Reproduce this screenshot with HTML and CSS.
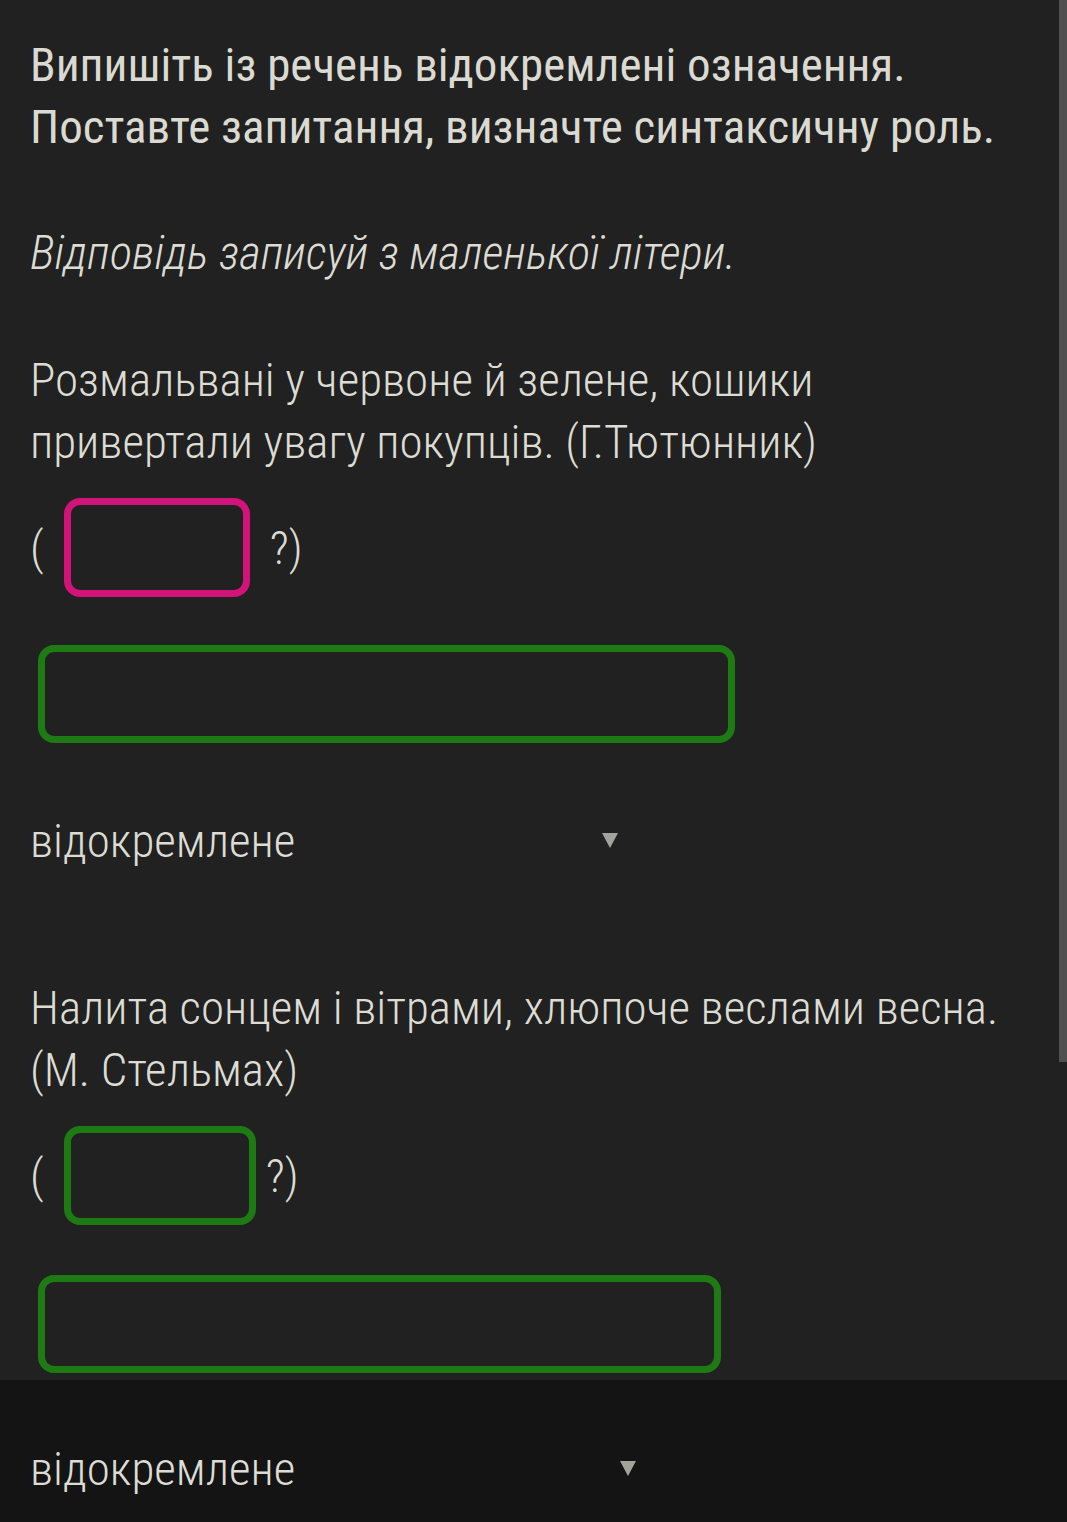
FILE: index.html
```html
<!DOCTYPE html>
<html>
<head>
  <meta charset="utf-8">
  <title>Відокремлені означення</title>
  <link rel="stylesheet" href="styles.css">
</head>
<body>
  <div class="page">
    <div class="task">
      <h1 class="task-title">Випишіть із речень відокремлені означення. Поставте запитання, визначте синтаксичну роль.</h1>
      <p class="hint">Відповідь записуй з маленької літери.</p>
    </div>

    <div class="item">
      <p class="sentence">Розмальвані у червоне й зелене, кошики привертали увагу покупців. (Г.Тютюнник)</p>
      <div class="question-row">
        <span class="paren">(</span>
        <input type="text" class="blank blank-wrong">
        <span class="paren">?)</span>
      </div>
      <input type="text" class="answer">
      <div class="select">
        <span class="select-value">відокремлене</span>
        <span class="select-arrow"></span>
      </div>
    </div>

    <div class="item item-second">
      <p class="sentence">Налита сонцем і вітрами, хлюпоче веслами весна. (М. Стельмах)</p>
      <div class="question-row">
        <span class="paren">(</span>
        <input type="text" class="blank blank-wide">
        <span class="paren paren-close">?)</span>
      </div>
      <input type="text" class="answer answer-short">
    </div>
  </div>

  <div class="bottom-bar">
    <div class="select select-bottom">
      <span class="select-value">відокремлене</span>
      <span class="select-arrow"></span>
    </div>
  </div>

  <div class="scrollbar"></div>
</body>
</html>
```

FILE: styles.css
```css
body {
  margin: 0;
  background: #212121;
  color: #dcdcd4;
  font-family: "Roboto Condensed", "Liberation Sans Narrow", "DejaVu Sans Condensed", sans-serif;
  height: 1522px;
  overflow: hidden;
  position: relative;
}

.page {
  padding: 34px 30px 0 30px;
}

.task-title {
  margin: 0;
  font-size: 47px;
  font-weight: 400;
  line-height: 62px;
  color: #dadad2;
  max-width: 1000px;
}

.hint {
  margin: 64px 0 0;
  font-size: 47px;
  font-weight: 300;
  font-style: italic;
  line-height: 62px;
}

.item {
  margin-top: 65px;
}

.item-second {
  margin-top: 106px;
}

.sentence {
  margin: 0;
  font-size: 47px;
  font-weight: 300;
  line-height: 62px;
  max-width: 1000px;
}

.question-row {
  display: flex;
  align-items: center;
  margin-top: 25px;
}

.paren {
  font-size: 47px;
  font-weight: 300;
  line-height: 1;
}

.blank {
  box-sizing: border-box;
  width: 186px;
  height: 99px;
  margin: 0 20px 0 20px;
  border: 7px solid #1e7a12;
  border-radius: 16px;
  background: transparent;
  outline: none;
}

.blank-wrong {
  border-color: #d1137a;
}

.blank-wide {
  width: 192px;
  margin-right: 10px;
}

.answer {
  display: block;
  box-sizing: border-box;
  width: 697px;
  height: 98px;
  margin: 48px 0 0 8px;
  border: 7px solid #1e7a12;
  border-radius: 16px;
  background: transparent;
  outline: none;
}

.answer-short {
  width: 683px;
  margin-top: 50px;
}

.select {
  display: flex;
  align-items: center;
  justify-content: space-between;
  width: 588px;
  height: 62px;
  margin-top: 66px;
}

.select-value {
  font-size: 47px;
  font-weight: 300;
}

.select-arrow {
  width: 0;
  height: 0;
  border-left: 8px solid transparent;
  border-right: 8px solid transparent;
  border-top: 15px solid #a3a39c;
}

.bottom-bar {
  position: absolute;
  left: 0;
  right: 0;
  top: 1380px;
  bottom: 0;
  background: #141414;
  padding: 0 30px;
}

.select-bottom {
  width: 606px;
  margin-top: 57px;
}

.scrollbar {
  position: absolute;
  top: 0;
  right: 0;
  width: 8px;
  height: 1062px;
  background: #505050;
}
```
